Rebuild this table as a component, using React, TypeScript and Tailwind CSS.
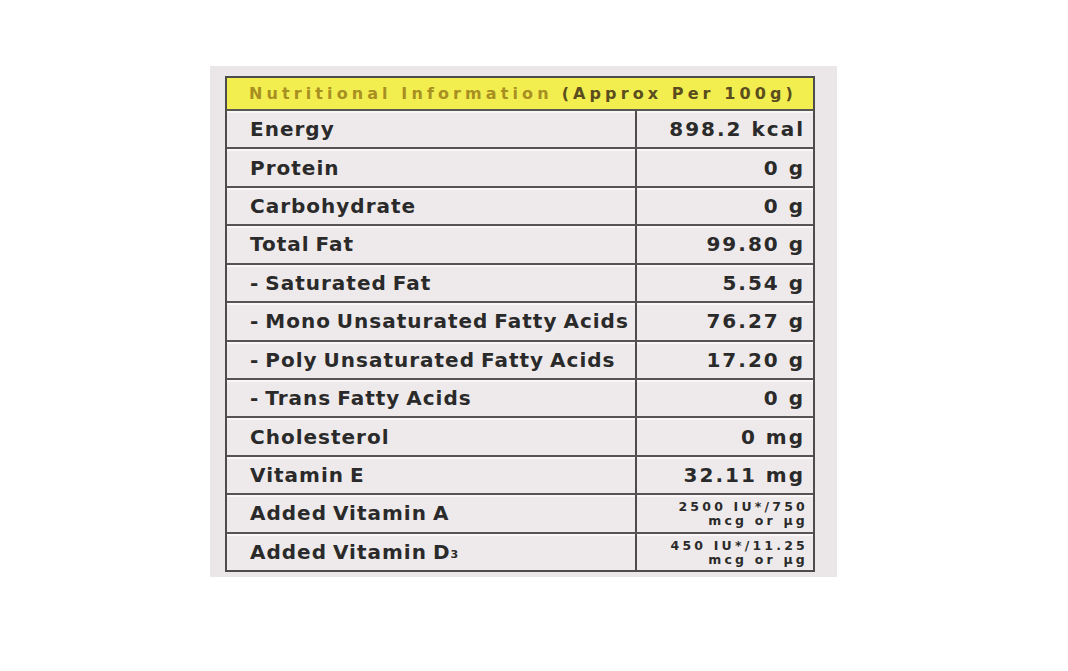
const small = (top: string, bottom: string) => (
  <span className="flex flex-col items-end text-[12.5px] leading-[14px] tracking-[3.2px] mr-[-3px] pt-[2px]">
    <span>{top}</span>
    <span>{bottom}</span>
  </span>
);

const rows: { label: React.ReactNode; value: React.ReactNode }[] = [
  { label: 'Energy', value: '898.2 kcal' },
  { label: 'Protein', value: '0 g' },
  { label: 'Carbohydrate', value: '0 g' },
  { label: 'Total Fat', value: '99.80 g' },
  { label: '- Saturated Fat', value: '5.54 g' },
  { label: '- Mono Unsaturated Fatty Acids', value: '76.27 g' },
  { label: '- Poly Unsaturated Fatty Acids', value: '17.20 g' },
  { label: '- Trans Fatty Acids', value: '0 g' },
  { label: 'Cholesterol', value: '0 mg' },
  { label: 'Vitamin E', value: '32.11 mg' },
  { label: 'Added Vitamin A', value: small('2500 IU*/750', 'mcg or µg') },
  {
    label: (
      <>
        Added Vitamin D<sub className="text-[11px] tracking-[0px]">3</sub>
      </>
    ),
    value: small('450 IU*/11.25', 'mcg or µg'),
  },
];

export default function App() {
  return (
    <div className="min-h-[671px] bg-white pt-[66px] pl-[210px] font-['DejaVu_Sans',sans-serif]">
      <div className="w-[627px] h-[511px] bg-[#ebe7e8] pt-[10px] pl-[15px]">
        <div className="w-[590px] h-[496px] border-2 border-[#4d4b4b] flex flex-col bg-[#eeeaeb]">
          {/* header band */}
          <div className="h-[33px] shrink-0 bg-[#f2ee4f] border-b-2 border-[#5a5750] flex items-center pl-[22px] text-[16px] font-bold tracking-[4.1px] whitespace-nowrap">
            <span className="text-[#a88f22]">Nutritional Information</span>
            <span className="text-[#5b4d1d] ml-[9px]">(Approx Per 100g)</span>
          </div>
          <div className="flex-1 flex flex-col">
            {rows.map((r, i) => (
              <div
                key={i}
                className={`flex-1 grid grid-cols-[410px_1fr] ${i < rows.length - 1 ? 'border-b-2 border-[#555353]' : ''}`}
              >
                <div className="border-r-2 border-[#4d4b4b] flex items-center pl-[23px] text-[20px] font-bold text-[#2b2a2a] tracking-[1px] [word-spacing:-2px] whitespace-nowrap shadow-[inset_0_2px_0_#f8f6f6]">
                  {r.label}
                </div>
                <div className="flex items-center justify-end pr-[8px] text-[20px] font-bold text-[#2b2a2a] tracking-[2px] whitespace-nowrap shadow-[inset_0_2px_0_#f8f6f6]">
                  {r.value}
                </div>
              </div>
            ))}
          </div>
        </div>
      </div>
    </div>
  );
}
